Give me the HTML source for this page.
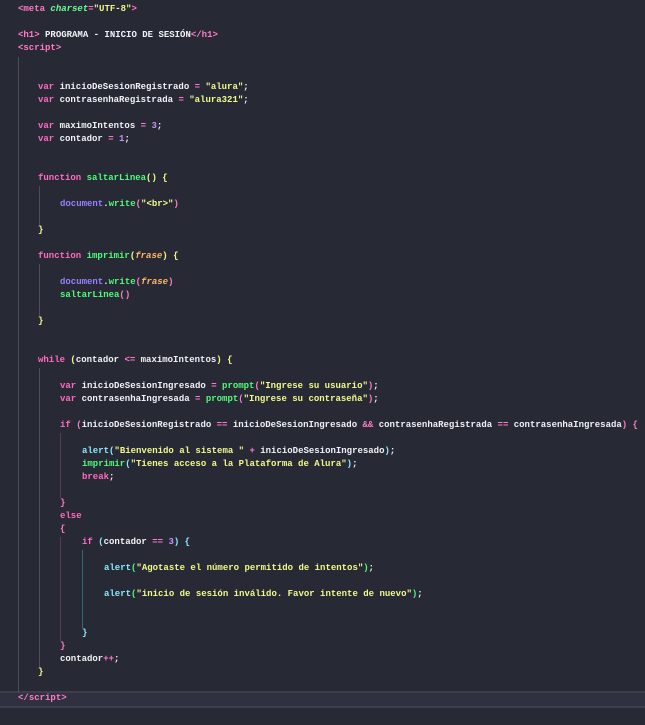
<!DOCTYPE html>
<html><head><meta charset="UTF-8"><style>
html,body{margin:0;padding:0;background:#282a36;width:645px;height:725px;overflow:hidden}
body{background:#272935;position:relative;font-family:"Liberation Mono","DejaVu Sans Mono",monospace;font-size:9px;color:#f1f2f8;font-weight:bold}
.l{position:absolute;white-space:pre;height:13px;line-height:13px}
.k{color:#ff6ac1}.s{color:#f1fa8c}.g{color:#50fa7b}.a{color:#69ff94;font-style:italic}
.n{color:#bd93f9}.f{color:#50fa7b}.d{color:#9580ff}.p{color:#ffb86c;font-style:italic}
.c{color:#8be9fd}.y{color:#f1fa8c}.m{color:#ff79c6}.b{color:#8be9fd}.o{color:#ff79c6}
.v{position:absolute;width:1px}
</style></head><body>
<div style="position:absolute;left:0;top:692px;width:645px;height:13px;background:#2f3140;border-top:2px solid #3c3e4c;border-bottom:2px solid #3c3e4c;box-sizing:content-box;top:691px"></div>
<div class="v" style="left:18px;top:57px;height:635px;background:#4b4d5a"></div>
<div class="v" style="left:39px;top:186px;height:39px;background:#4b4d5a"></div>
<div class="v" style="left:39px;top:264px;height:52px;background:#4b4d5a"></div>
<div class="v" style="left:39px;top:368px;height:300px;background:#4b4d5a"></div>
<div class="v" style="left:60px;top:433px;height:65px;background:#5a3a55"></div>
<div class="v" style="left:60px;top:537px;height:104px;background:#5a3a55"></div>
<div class="v" style="left:82px;top:550px;height:78px;background:#2f6b73"></div>

<div class="l" style="left:18px;top:3px"><span class="o">&lt;</span><span class="m">meta</span> <span class="a">charset</span><span class="o">=</span><span class="s">"UTF-8"</span><span class="o">&gt;</span></div>
<div class="l" style="left:18px;top:29px"><span class="o">&lt;</span><span class="m">h1</span><span class="o">&gt;</span> PROGRAMA - INICIO DE SESIÓN<span class="o">&lt;/</span><span class="m">h1</span><span class="o">&gt;</span></div>
<div class="l" style="left:18px;top:42px"><span class="o">&lt;</span><span class="m">script</span><span class="o">&gt;</span></div>
<div class="l" style="left:38px;top:81px"><span class="k">var</span> inicioDeSesionRegistrado <span class="o">=</span> <span class="s">"alura"</span>;</div>
<div class="l" style="left:38px;top:94px"><span class="k">var</span> contrasenhaRegistrada <span class="o">=</span> <span class="s">"alura321"</span>;</div>
<div class="l" style="left:38px;top:120px"><span class="k">var</span> maximoIntentos <span class="o">=</span> <span class="n">3</span>;</div>
<div class="l" style="left:38px;top:133px"><span class="k">var</span> contador <span class="o">=</span> <span class="n">1</span>;</div>
<div class="l" style="left:38px;top:172px"><span class="k">function</span> <span class="f">saltarLinea</span><span class="y">()</span> <span class="y">{</span></div>
<div class="l" style="left:60px;top:198px"><span class="d">document</span>.<span class="f">write</span><span class="m">(</span><span class="s">"&lt;br&gt;"</span><span class="m">)</span></div>
<div class="l" style="left:38px;top:224px"><span class="y">}</span></div>
<div class="l" style="left:38px;top:250px"><span class="k">function</span> <span class="f">imprimir</span><span class="y">(</span><span class="p">frase</span><span class="y">)</span> <span class="y">{</span></div>
<div class="l" style="left:60px;top:276px"><span class="d">document</span>.<span class="f">write</span><span class="m">(</span><span class="p">frase</span><span class="m">)</span></div>
<div class="l" style="left:60px;top:289px"><span class="f">saltarLinea</span><span class="m">()</span></div>
<div class="l" style="left:38px;top:315px"><span class="y">}</span></div>
<div class="l" style="left:38px;top:354px"><span class="k">while</span> <span class="y">(</span>contador <span class="o">&lt;=</span> maximoIntentos<span class="y">)</span> <span class="y">{</span></div>
<div class="l" style="left:60px;top:380px"><span class="k">var</span> inicioDeSesionIngresado <span class="o">=</span> <span class="f">prompt</span><span class="m">(</span><span class="s">"Ingrese su usuario"</span><span class="m">)</span>;</div>
<div class="l" style="left:60px;top:393px"><span class="k">var</span> contrasenhaIngresada <span class="o">=</span> <span class="f">prompt</span><span class="m">(</span><span class="s">"Ingrese su contraseña"</span><span class="m">)</span>;</div>
<div class="l" style="left:60px;top:419px"><span class="k">if</span> <span class="m">(</span>inicioDeSesionRegistrado <span class="o">==</span> inicioDeSesionIngresado <span class="o">&amp;&amp;</span> contrasenhaRegistrada <span class="o">==</span> contrasenhaIngresada<span class="m">)</span> <span class="m">{</span></div>
<div class="l" style="left:82px;top:445px"><span class="c">alert</span><span class="b">(</span><span class="s">"Bienvenido al sistema "</span> <span class="o">+</span> inicioDeSesionIngresado<span class="b">)</span>;</div>
<div class="l" style="left:82px;top:458px"><span class="f">imprimir</span><span class="b">(</span><span class="s">"Tienes acceso a la Plataforma de Alura"</span><span class="b">)</span>;</div>
<div class="l" style="left:82px;top:471px"><span class="k">break</span>;</div>
<div class="l" style="left:60px;top:497px"><span class="m">}</span></div>
<div class="l" style="left:60px;top:510px"><span class="k">else</span></div>
<div class="l" style="left:60px;top:523px"><span class="m">{</span></div>
<div class="l" style="left:82px;top:536px"><span class="k">if</span> <span class="b">(</span>contador <span class="o">==</span> <span class="n">3</span><span class="b">)</span> <span class="b">{</span></div>
<div class="l" style="left:104px;top:562px"><span class="c">alert</span><span class="g">(</span><span class="s">"Agotaste el número permitido de intentos"</span><span class="g">)</span>;</div>
<div class="l" style="left:104px;top:588px"><span class="c">alert</span><span class="g">(</span><span class="s">"inicio de sesión inválido. Favor intente de nuevo"</span><span class="g">)</span>;</div>
<div class="l" style="left:82px;top:627px"><span class="b">}</span></div>
<div class="l" style="left:60px;top:640px"><span class="m">}</span></div>
<div class="l" style="left:60px;top:653px">contador<span class="o">++</span>;</div>
<div class="l" style="left:38px;top:666px"><span class="y">}</span></div>
<div class="l" style="left:18px;top:692px"><span class="o">&lt;/</span><span class="m">script</span><span class="o">&gt;</span></div>
</body></html>
